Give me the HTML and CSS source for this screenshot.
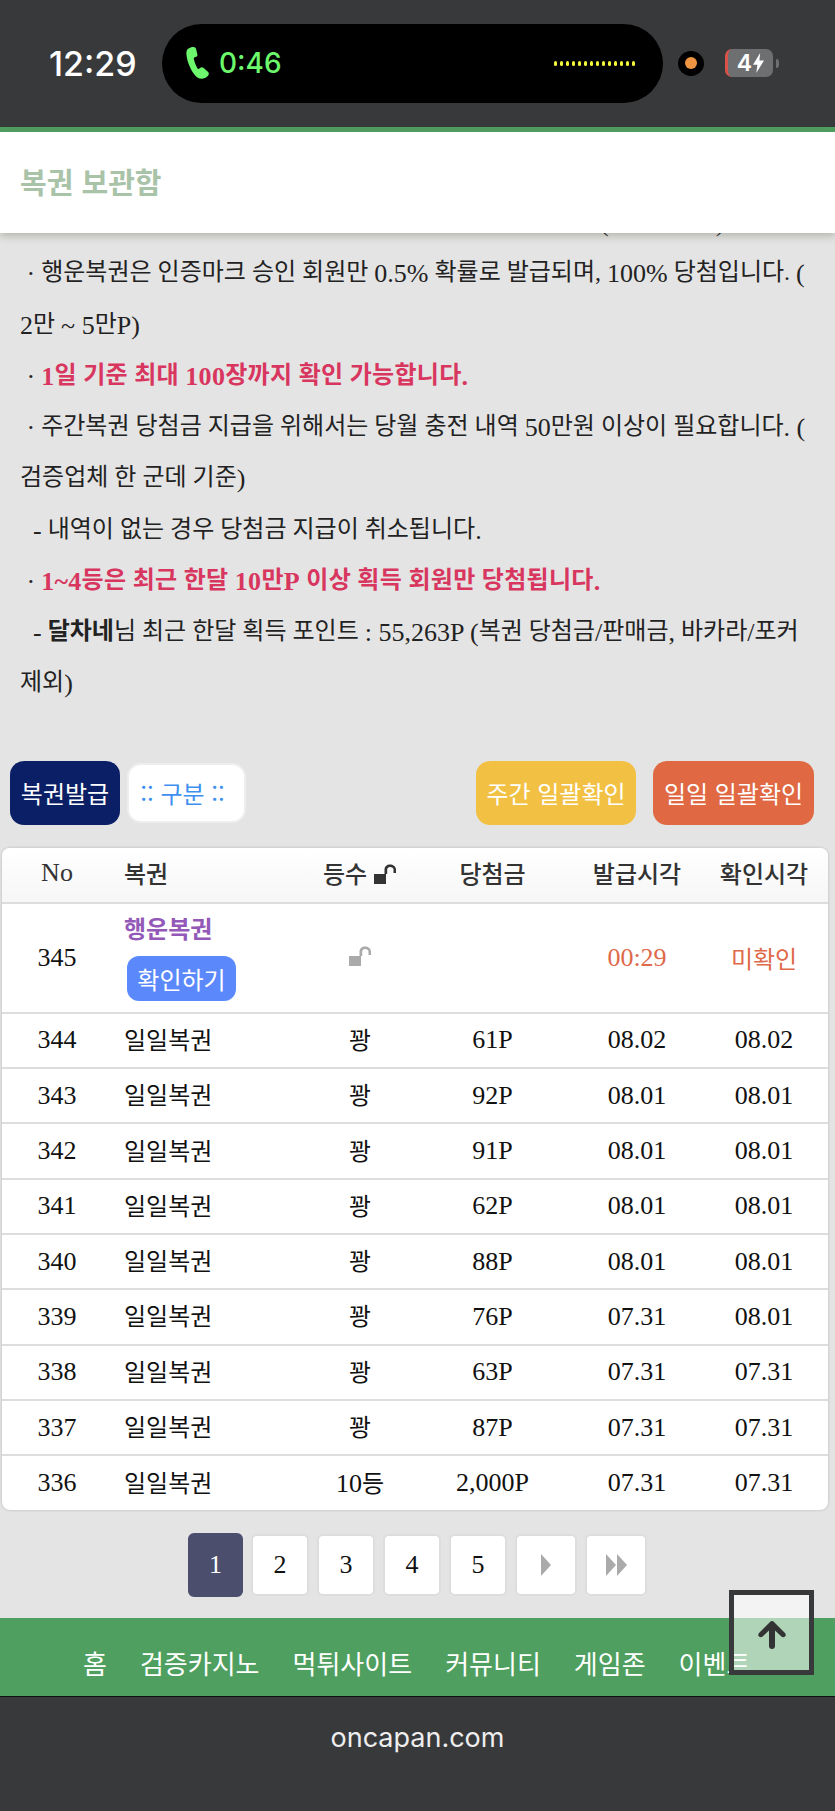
FILE: index.html
```html
<!DOCTYPE html>
<html lang="ko">
<head>
    <meta charset="UTF-8">
    <meta name="viewport" content="width=device-width, initial-scale=1.0">
    <title>복권 보관함</title>
    <link rel="stylesheet" href="styles.css">
</head>
<body>
    <div class="status-bar">
        <span class="clock">12:29</span>
        <div class="island">
            <svg class="phone-icon" viewBox="0 0 23 32" width="23" height="32">
                <path d="M3 1.2 C1 2 .2 4 .4 7 C.8 13 3.6 21 8 27 C10.4 30.4 13.6 32.4 17 31.6 C19.8 31 22.6 29 22.8 27 C22.9 26 22.4 25.4 21.6 24.6 L17.4 20.8 C16.4 20 15.4 20 14.4 20.8 L13 21.8 C12.4 22.2 11.8 22 11.4 21.2 C9.6 18 8.2 14.4 7.8 11.6 C7.7 10.8 8 10.4 8.8 10.2 L10 9.8 C11.2 9.4 11.6 8.6 11.4 7.4 L10.2 2.4 C9.8 .8 8.8 0 7.4 0 C6 0 4.4 .6 3 1.2 Z" fill="#6cf76c"/>
            </svg>
            <span class="call-time">0:46</span>
            <div class="wave">
                <i></i><i></i><i></i><i></i><i></i><i></i><i></i><i></i><i></i><i></i><i></i><i></i><i></i><i></i>
            </div>
        </div>
        <div class="mic-dot"><i></i></div>
        <div class="battery"><span>4</span><svg viewBox="0 0 10 18" width="11" height="20"><path d="M6.5 0 L0 10.5 H4 L3 18 L10 6.8 H5.8 Z" fill="#fff"/></svg></div>
        <div class="battery-nub"></div>
    </div>

    <header class="page-head">
        <h1>복권 보관함</h1>
    </header>

    <section class="notice">
        <p class="cut-line"><span class="num">(</span><span class="cut-gap"></span><span class="num">)</span></p>
        <p><span class="num">&nbsp;·</span> 행운복권은 인증마크 승인 회원만 <span class="num">0.5%</span> 확률로 발급되며, <span class="num">100%</span> 당첨입니다. <span class="num">(</span> <span class="num">2</span>만 <span class="num">~ 5</span>만<span class="num">P)</span></p>
        <p><span class="num">&nbsp;·</span> <strong class="red"><span class="num">1</span>일 기준 최대 <span class="num">100</span>장까지 확인 가능합니다<span class="num">.</span></strong></p>
        <p><span class="num">&nbsp;·</span> 주간복권 당첨금 지급을 위해서는 당월 충전 내역 <span class="num">50</span>만원 이상이 필요합니다<span class="num">. (</span> 검증업체 한 군데 기준<span class="num">)</span></p>
        <p><span class="num">&nbsp; -</span> 내역이 없는 경우 당첨금 지급이 취소됩니다<span class="num">.</span></p>
        <p><span class="num">&nbsp;·</span> <strong class="red"><span class="num">1~4</span>등은 최근 한달 <span class="num">10</span>만<span class="num">P</span> 이상 획득 회원만 당첨됩니다<span class="num">.</span></strong></p>
        <p><span class="num">&nbsp; -</span> <strong>달차네</strong>님 최근 한달 획득 포인트 <span class="num">: 55,263P (</span>복권 당첨금<span class="num">/</span>판매금<span class="num">,</span> 바카라<span class="num">/</span>포커 제외<span class="num">)</span></p>
    </section>

    <div class="toolbar">
        <div class="toolbar-left">
            <button class="btn btn-navy">복권발급</button>
            <button class="btn btn-filter">:: 구분 ::</button>
        </div>
        <div class="toolbar-right">
            <button class="btn btn-yellow">주간 일괄확인</button>
            <button class="btn btn-orange">일일 일괄확인</button>
        </div>
    </div>

    <div class="table-wrap">
        <table class="ticket-table">
            <colgroup>
                <col class="c-no"><col class="c-name"><col class="c-rank"><col class="c-prize"><col class="c-issued"><col class="c-checked">
            </colgroup>
            <thead>
                <tr>
                    <th class="latin">No</th>
                    <th class="left">복권</th>
                    <th>등수 <svg class="lock" viewBox="0 0 24 20" width="24" height="20"><path d="M1 10 H13 V20 H1 Z M11.5 10 V5.5 C11.5 2.5 14 .5 17 .5 C20 .5 23 2.5 23 5.5 V9 H20.5 V5.5 C20.5 4 19 3 17 3 C15.4 3 14.2 4 14.2 5.5 V10 Z" fill="#333"/></svg></th>
                    <th>당첨금</th>
                    <th>발급시각</th>
                    <th>확인시각</th>
                </tr>
            </thead>
            <tbody>
                <tr class="new-row">
                    <td>345</td>
                    <td class="left">
                        <strong class="lucky">행운복권</strong>
                        <button class="btn-check">확인하기</button>
                    </td>
                    <td class="ko"><svg class="lock" viewBox="0 0 24 20" width="24" height="20"><path d="M1 10 H13 V20 H1 Z M11.5 10 V5.5 C11.5 2.5 14 .5 17 .5 C20 .5 23 2.5 23 5.5 V9 H20.5 V5.5 C20.5 4 19 3 17 3 C15.4 3 14.2 4 14.2 5.5 V10 Z" fill="#aaa"/></svg></td>
                    <td></td>
                    <td class="warn">00:29</td>
                    <td class="warn ko">미확인</td>
                </tr>
                <tr><td>344</td><td class="left">일일복권</td><td class="ko">꽝</td><td>61P</td><td>08.02</td><td>08.02</td></tr>
                <tr><td>343</td><td class="left">일일복권</td><td class="ko">꽝</td><td>92P</td><td>08.01</td><td>08.01</td></tr>
                <tr><td>342</td><td class="left">일일복권</td><td class="ko">꽝</td><td>91P</td><td>08.01</td><td>08.01</td></tr>
                <tr><td>341</td><td class="left">일일복권</td><td class="ko">꽝</td><td>62P</td><td>08.01</td><td>08.01</td></tr>
                <tr><td>340</td><td class="left">일일복권</td><td class="ko">꽝</td><td>88P</td><td>08.01</td><td>08.01</td></tr>
                <tr><td>339</td><td class="left">일일복권</td><td class="ko">꽝</td><td>76P</td><td>07.31</td><td>08.01</td></tr>
                <tr><td>338</td><td class="left">일일복권</td><td class="ko">꽝</td><td>63P</td><td>07.31</td><td>07.31</td></tr>
                <tr><td>337</td><td class="left">일일복권</td><td class="ko">꽝</td><td>87P</td><td>07.31</td><td>07.31</td></tr>
                <tr><td>336</td><td class="left">일일복권</td><td class="ko"><span class="num">10</span>등</td><td>2,000P</td><td>07.31</td><td>07.31</td></tr>
            </tbody>
        </table>
    </div>

    <nav class="pager">
        <a class="page current">1</a>
        <a class="page">2</a>
        <a class="page">3</a>
        <a class="page">4</a>
        <a class="page">5</a>
        <a class="page wide"><svg viewBox="0 0 10 22" width="10" height="22"><path d="M0 0 L10 11 L0 22 Z" fill="#aaa"/></svg></a>
        <a class="page wide"><svg viewBox="0 0 21 22" width="21" height="22"><path d="M0 0 L10 11 L0 22 Z M11 0 L21 11 L11 22 Z" fill="#aaa"/></svg></a>
    </nav>

    <nav class="main-nav">
        <a>홈</a>
        <a>검증카지노</a>
        <a>먹튀사이트</a>
        <a>커뮤니티</a>
        <a>게임존</a>
        <a>이벤트</a>
    </nav>

    <footer class="site-foot">oncapan.com</footer>

    <a class="to-top">
        <svg viewBox="0 0 28 28" width="28" height="28"><path d="M14 0 C14.8 0 15.5 .4 16 1 L27 12 C28 13.2 28 14.6 27 15.6 C26 16.6 24.4 16.6 23.4 15.6 L17 9.4 V25 C17 26.8 15.8 28 14 28 C12.2 28 11 26.8 11 25 V9.4 L4.6 15.6 C3.6 16.6 2 16.6 1 15.6 C0 14.6 0 13.2 1 12 L12 1 C12.5 .4 13.2 0 14 0 Z" fill="#333"/></svg>
    </a>
</body>
</html>
```

FILE: styles.css
```css
* {
    box-sizing: border-box;
}

html, body {
    margin: 0;
    padding: 0;
}

body {
    position: relative;
    width: 835px;
    height: 1811px;
    overflow: hidden;
    background-color: #e4e4e4;
    color: #222;
    font-family: "Liberation Serif", "Noto Sans CJK KR", serif;
    font-size: 24px;
}

/* latin runs sit a bit larger and lower than the hangul around them */
.num {
    font-size: 26px;
    line-height: 1;
    vertical-align: -2px;
}

/* status bar */
.status-bar {
    display: flex;
    align-items: center;
    height: 132px;
    padding: 0 0 1px 49px;
    background-color: #38393b;
    border-bottom: 5px solid #4fa060;
    font-family: Inter, "Liberation Sans", sans-serif;
}

.clock {
    width: 113px;
    color: #fff;
    font-size: 34px;
    font-weight: 500;
}

.island {
    display: flex;
    align-items: center;
    width: 501px;
    height: 79px;
    padding: 0 28px 0 24px;
    background-color: #000;
    border-radius: 40px;
}

.call-time {
    margin-left: 10px;
    color: #6cf76c;
    font-size: 28px;
    font-weight: 500;
}

.wave {
    display: flex;
    gap: 3px;
    margin-left: auto;
}

.wave i {
    width: 3px;
    height: 5px;
    background-color: #f4f83c;
    border-radius: 2px;
}

.mic-dot {
    display: flex;
    align-items: center;
    justify-content: center;
    width: 26px;
    height: 25px;
    margin-left: 15px;
    background-color: #000;
    border-radius: 50%;
}

.mic-dot i {
    width: 12px;
    height: 12px;
    background-color: #ef9440;
    border-radius: 50%;
}

.battery {
    display: flex;
    align-items: center;
    justify-content: center;
    gap: 1px;
    width: 48px;
    height: 28px;
    margin-left: 21px;
    background-color: #6e6f71;
    border-left: 3px solid #d9534a;
    border-radius: 7px;
    color: #fff;
    font-size: 23px;
    font-weight: 600;
}

.battery-nub {
    width: 3px;
    height: 9px;
    margin-left: 3px;
    background-color: #6e6f71;
    border-radius: 0 3px 3px 0;
}

/* title */
.page-head {
    position: relative;
    z-index: 2;
    display: flex;
    align-items: center;
    height: 101px;
    padding: 0 0 4px 20px;
    background-color: #fff;
    box-shadow: 0 3px 8px rgba(90, 90, 70, 0.35);
}

.page-head h1 {
    margin: 0;
    color: #a9c3a9;
    font-family: "Noto Sans CJK KR", sans-serif;
    font-size: 29px;
    font-weight: 700;
}

/* notice text */
.notice {
    margin-top: -37px;
    padding: 0 15px 0 20px;
    line-height: 51.25px;
    word-break: keep-all;
}

.notice p {
    margin: 0;
}

.cut-line {
    padding-left: 580px;
}

.cut-gap {
    display: inline-block;
    width: 107px;
}

.red {
    color: #d8365f;
    letter-spacing: 0.3px;
}

/* buttons */
.toolbar {
    display: flex;
    align-items: center;
    justify-content: space-between;
    height: 64px;
    margin-top: 52px;
    padding: 0 21px 0 10px;
}

.toolbar-left,
.toolbar-right {
    display: flex;
    align-items: center;
}

.toolbar-left {
    gap: 7px;
}

.toolbar-right {
    gap: 17px;
}

.btn {
    height: 64px;
    padding: 0;
    border: none;
    border-radius: 14px;
    color: #fff;
    font-family: "Noto Sans CJK KR", sans-serif;
    font-size: 24px;
}

.btn-navy {
    width: 110px;
    background-color: #0a1f66;
}

.btn-filter {
    width: 119px;
    height: 60px;
    padding-right: 8px;
    background-color: #fff;
    border: 2px solid #eee;
    color: #3d8ff0;
}

.btn-yellow {
    width: 160px;
    background-color: #f2c144;
}

.btn-orange {
    width: 161px;
    background-color: #e06842;
}

/* table */
.table-wrap {
    width: 826px;
    margin: 23px 0 0 2px;
    background-color: #fff;
    border-radius: 8px;
    box-shadow: 0 0 3px rgba(0, 0, 0, 0.2);
    overflow: hidden;
}

.ticket-table {
    width: 100%;
    border-collapse: collapse;
    table-layout: fixed;
}

.c-no { width: 110px; }
.c-name { width: 197px; }
.c-rank { width: 102px; }
.c-prize { width: 163px; }
.c-issued { width: 126px; }
.c-checked { width: 128px; }

.ticket-table th,
.ticket-table td {
    height: 55.3px;
    padding: 0;
    border-bottom: 2px solid #ddd;
    text-align: center;
    font-weight: 400;
    font-size: 26px;
    color: #111;
}

.ticket-table th {
    padding-bottom: 4px;
    background: linear-gradient(#fff, #f6f6f6);
    color: #333;
    font-size: 24px;
    font-weight: 500;
}

.ticket-table th.latin {
    font-size: 26px;
    font-weight: 400;
}

.ticket-table tbody tr:last-child td {
    height: 55px;
    border-bottom: none;
}

.ticket-table .left,
.ticket-table .ko {
    padding-bottom: 4px;
    font-size: 24px;
}

.ticket-table .left {
    padding-left: 12px;
    text-align: left;
}

.ticket-table .new-row td {
    height: 110px;
    padding-bottom: 0;
}

.ticket-table .num {
    vertical-align: 0;
}

.lucky {
    display: block;
    color: #9359b8;
    line-height: 30px;
}

.btn-check {
    display: block;
    width: 109px;
    height: 45px;
    margin: 11px 0 0 3px;
    padding: 0;
    background-color: #5b89fb;
    border: none;
    border-radius: 12px;
    color: #fff;
    font-family: "Noto Sans CJK KR", sans-serif;
    font-size: 24px;
}

.ticket-table .warn {
    color: #e0694a;
}

.lock {
    vertical-align: -1px;
}

/* pagination */
.pager {
    display: flex;
    align-items: center;
    justify-content: center;
    gap: 8px;
    height: 64px;
    margin: 23px 0 0 0;
    font-size: 26px;
}

.page {
    display: flex;
    align-items: center;
    justify-content: center;
    width: 58px;
    height: 62px;
    background-color: #fff;
    border: 2px solid #ddd;
    border-radius: 6px;
    color: #111;
}

.page.current {
    width: 55px;
    height: 64px;
    background-color: #4b4e6d;
    border-color: #4b4e6d;
    color: #fff;
}

.page.wide {
    width: 62px;
}

/* bottom */
.main-nav {
    display: flex;
    align-items: center;
    gap: 33px;
    height: 78px;
    margin-top: 21px;
    padding: 10px 0 0 83px;
    background-color: #4fa060;
    color: #fff;
    font-family: "Noto Sans CJK KR", sans-serif;
    font-size: 26px;
    white-space: nowrap;
}

.site-foot {
    height: 115px;
    padding-top: 24px;
    background-color: #38393b;
    border-top: 1px solid #111;
    color: #eee;
    font-family: Inter, "Liberation Sans", sans-serif;
    font-size: 27px;
    text-align: center;
}

.to-top {
    position: absolute;
    left: 729px;
    top: 1590px;
    display: flex;
    justify-content: center;
    width: 85px;
    height: 85px;
    padding-top: 26px;
    background-color: rgba(255, 255, 255, 0.55);
    border: 5px solid #38393b;
}
```
